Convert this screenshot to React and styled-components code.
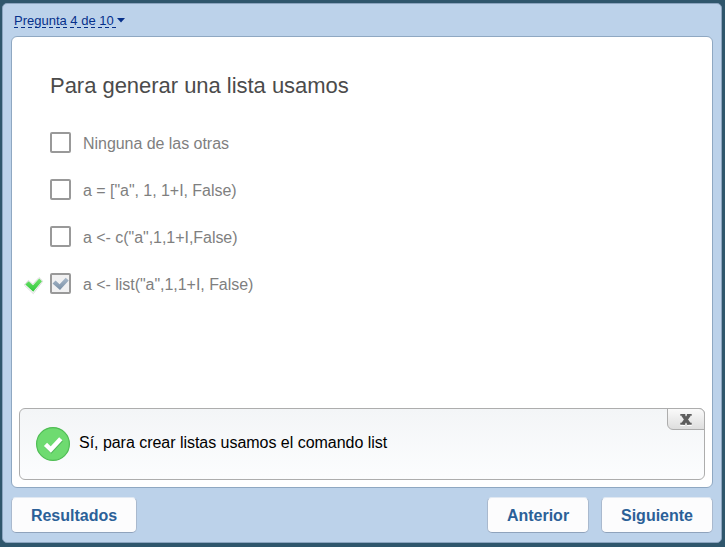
import React from "react";
import styled, { createGlobalStyle } from "styled-components";

const GlobalStyle = createGlobalStyle`
  *, *::before, *::after { box-sizing: border-box; }
  body { margin: 0; background: #2f566c; }
  button { font: inherit; margin: 0; cursor: pointer; }
`;

const Page = styled.main`
  width: 725px;
  height: 547px;
  padding: 3px 3px 3px 2px;
  background: #2f566c;
  font-family: "Liberation Sans", Arial, sans-serif;
`;

const QuizFrame = styled.div`
  display: flex;
  flex-direction: column;
  height: 540px;
  padding: 0 8px;
  border: 1px solid #8ba4bf;
  border-radius: 5px;
  background: #bcd2ea;
`;

const TopBar = styled.header`
  height: 32px;
  flex: none;
  padding: 9px 0 0 3px;
`;

const QuestionMenu = styled.button`
  display: flex;
  align-items: flex-start;
  padding: 0;
  border: 0;
  background: none;
  color: #06308a;
`;

const MenuLabel = styled.span`
  width: 103px;
  height: 15px;
  font-size: 13px;
  line-height: 15px;
  text-align: left;
  white-space: nowrap;
  background: repeating-linear-gradient(90deg, #06308a 0 4px, transparent 4px 7px) 0 100% / 100% 1px no-repeat;
`;

const Caret = styled.svg`
  width: 8px;
  height: 5px;
  margin-top: 5px;
  fill: #06308a;
`;

const QuestionPanel = styled.section`
  display: flex;
  flex-direction: column;
  justify-content: space-between;
  height: 452px;
  flex: none;
  padding: 0 7px 7px;
  border: 1px solid #8fa8c2;
  border-radius: 6px;
  background: #fff;
`;

const Question = styled.div`
  padding: 36px 0 0 5px;
`;

const Title = styled.h1`
  margin: 0 0 21px 26px;
  color: #4b4b4b;
  font-size: 22px;
  font-weight: 400;
  line-height: 25px;
  letter-spacing: -0.03px;
`;

const Options = styled.ul`
  margin: 0;
  padding: 0;
  list-style: none;
`;

const Option = styled.li`
  display: grid;
  grid-template-columns: 19px 21px 1fr;
  column-gap: 7px;
  align-items: center;
  height: 47px;
`;

const OptionLabel = styled.span`
  padding: 2px 0 0 5px;
  color: #7f7f7f;
  font-size: 16px;
  line-height: 18px;
  letter-spacing: -0.04px;
`;

const CheckBox = styled.span`
  display: grid;
  place-items: center;
  width: 21px;
  height: 21px;
  border: 2px solid #999;
  border-radius: 2px;
  background: ${({ $checked }) => ($checked ? "#f1f1f2" : "#fff")};
`;

const Glyph = styled.svg`
  display: block;
  overflow: visible;
`;

const Feedback = styled.aside`
  display: flex;
  justify-content: space-between;
  height: 72px;
  border: 1px solid #adadad;
  border-radius: 6px;
  background: linear-gradient(#f3f5f7, #fcfdfe);
`;

const FeedbackMessage = styled.div`
  display: flex;
  align-items: center;
  gap: 9px;
  padding-left: 16px;
  color: #000;
  font-size: 16px;
  letter-spacing: -0.03px;
`;

const FeedbackText = styled.p`
  margin: 0 0 2px;
`;

const CloseButton = styled.button`
  display: grid;
  place-items: center;
  width: 38px;
  height: 22px;
  margin: -1px -1px 0 0;
  padding: 0;
  border: 1px solid #adadad;
  border-radius: 0 6px 0 6px;
  background: linear-gradient(#fafafa, #dedede);
`;

const Navigation = styled.nav`
  display: flex;
  gap: 12px;
  padding-top: 9px;
`;

const NavButton = styled.button`
  width: ${({ $width }) => $width}px;
  height: 36px;
  margin-right: ${({ $first }) => ($first ? "auto" : "0")};
  padding: 1px 0 0;
  border: 1px solid #a9b9ce;
  border-top-color: #e0e8f2;
  border-bottom-color: #8fa3bc;
  border-radius: 5px;
  background: #fcfcfd;
  color: #2b6098;
  && {
    font-size: 16px;
    font-weight: 700;
  }
`;

function CorrectMark() {
  return (
    <Glyph width="19" height="19" viewBox="0 0 19 19" aria-label="Correcta">
      <defs>
        <linearGradient id="correctFill" x2="0" y2="1">
          <stop offset="0" stopColor="#70e16a" />
          <stop offset="1" stopColor="#2fc83c" />
        </linearGradient>
      </defs>
      <path d="M.3 11 4.4 6.4 8.8 10.2 15 3.6 18.8 7.2 9.3 19.6Z" fill="#fff" stroke="#dadada" strokeLinejoin="round" />
      <path d="M1.3 10.6 4.6 7.3 9 11.3 15.2 4.5 18 7.2 9.2 17.7Z" fill="url(#correctFill)" />
    </Glyph>
  );
}

function SelectedMark() {
  return (
    <Glyph width="17" height="17" viewBox="0 0 17 17">
      <defs>
        <linearGradient id="selectedFill" x2="0" y2="1">
          <stop offset="0" stopColor="#a9b9ca" />
          <stop offset="1" stopColor="#788ea5" />
        </linearGradient>
      </defs>
      <path d="M.5 8.5 3.6 5.4 7.6 9.2 13.7 2.8 16.7 5.4 8 15Z" fill="url(#selectedFill)" />
    </Glyph>
  );
}

function SuccessIcon() {
  return (
    <Glyph width="34" height="34" viewBox="0 0 34 34">
      <circle cx="17" cy="17" r="16.4" fill="#6edb70" stroke="#4fbd54" strokeWidth="1.2" />
      <path d="m9.5 17.3 5.3 5.2L24.8 11.8" fill="none" stroke="#50b85a" strokeWidth="4.5" transform="translate(.5 1)" />
      <path d="m9.5 17.3 5.3 5.2L24.8 11.8" fill="none" stroke="#fff" strokeWidth="4.5" />
    </Glyph>
  );
}

function CloseIcon() {
  return (
    <Glyph width="12" height="13" viewBox="0 0 12 13">
      <path d="M.3 12h4.6M7.1 12h4.6" fill="none" stroke="#fff" strokeWidth="2" />
      <path d="M2.8 2 9.2 11M9.2 2 2.8 11" fill="none" stroke="#5d5d5d" strokeWidth="3.4" />
      <path d="M.3 1.9h5M6.9 1.9h4.8M.3 10.8h4.8M6.9 10.8h4.8" fill="none" stroke="#5d5d5d" strokeWidth="1.9" />
    </Glyph>
  );
}

const options = [
  { label: "Ninguna de las otras" },
  { label: 'a = ["a", 1, 1+I, False)' },
  { label: 'a <- c("a",1,1+I,False)' },
  { label: 'a <- list("a",1,1+I, False)', selected: true, correct: true },
];

export default function App() {
  return (
    <>
      <GlobalStyle />
      <Page>
        <QuizFrame>
          <TopBar>
            <QuestionMenu>
              <MenuLabel>Pregunta 4 de 10</MenuLabel>
              <Caret viewBox="0 0 8 5"><path d="M0 0h8L4 4.5Z" /></Caret>
            </QuestionMenu>
          </TopBar>
          <QuestionPanel>
            <Question>
              <Title>Para generar una lista usamos</Title>
              <Options>
                {options.map(({ label, selected, correct }) => (
                  <Option key={label}>
                    <span>{correct && <CorrectMark />}</span>
                    <CheckBox role="checkbox" aria-checked={!!selected} $checked={selected}>
                      {selected && <SelectedMark />}
                    </CheckBox>
                    <OptionLabel>{label}</OptionLabel>
                  </Option>
                ))}
              </Options>
            </Question>
            <Feedback>
              <FeedbackMessage>
                <SuccessIcon />
                <FeedbackText>Sí, para crear listas usamos el comando list</FeedbackText>
              </FeedbackMessage>
              <CloseButton aria-label="Cerrar"><CloseIcon /></CloseButton>
            </Feedback>
          </QuestionPanel>
          <Navigation>
            <NavButton $width={126} $first>Resultados</NavButton>
            <NavButton $width={102}>Anterior</NavButton>
            <NavButton $width={112}>Siguiente</NavButton>
          </Navigation>
        </QuizFrame>
      </Page>
    </>
  );
}
